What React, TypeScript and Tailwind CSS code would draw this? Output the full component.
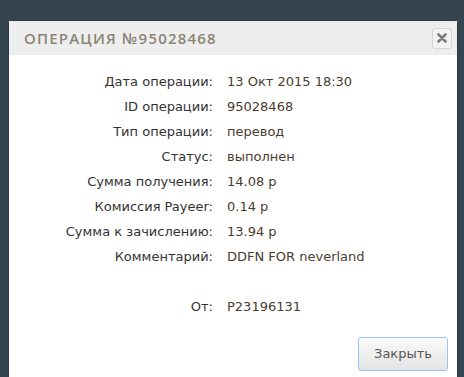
import React from 'react';

const rows: [string, string][] = [
    ['Дата операции:', '13 Окт 2015 18:30'],
    ['ID операции:', '95028468'],
    ['Тип операции:', 'перевод'],
    ['Статус:', 'выполнен'],
    ['Сумма получения:', '14.08 р'],
    ['Комиссия Payeer:', '0.14 р'],
    ['Сумма к зачислению:', '13.94 р'],
    ['Комментарий:', 'DDFN FOR neverland'],
    ['', ''],
    ['От:', 'P23196131'],
];

export default function App() {
    return (
        <div className="w-[464px] h-[377px] overflow-hidden bg-[#344550] pt-[20px] pl-[8px]">
            <div className="w-[450px] h-[400px] bg-white rounded-t-[3px] border border-[#2a3840]">
                <div className="h-[34px] bg-[#eeeeee] flex items-center justify-between pl-[15px] pr-[5px]">
                    <h3 className="font-['Open_Sans',sans-serif] text-[15px] font-semibold tracking-[1.2px] text-[#8c8374]">
                        ОПЕРАЦИЯ №95028468
                    </h3>
                    <button className="w-[20px] h-[21px] rounded-[3px] border border-[#d6d6d6] bg-[#f2f2f2] flex items-center justify-center">
                        <svg width="10" height="10" viewBox="0 0 10 10">
                            <path d="M1.5 1.5 L8.5 8.5 M8.5 1.5 L1.5 8.5" stroke="#7a7a7a" strokeWidth="2.6" strokeLinecap="round" />
                        </svg>
                    </button>
                </div>
                <div className="pt-[14px] font-['DejaVu_Sans',sans-serif] text-[13px] leading-[25px]">
                    {rows.map(([label, value], i) => (
                        <div key={i} className="flex h-[25px]">
                            <div className="w-[204px] text-right text-[#333333]">{label}</div>
                            <div className="pl-[14px] text-[#4a3c2e]">{value}</div>
                        </div>
                    ))}
                </div>
                <div className="flex justify-end pr-[9px] pt-[18px]">
                    <button className="w-[90px] h-[34px] rounded-[3px] border border-[#9ec1ef] bg-gradient-to-b from-[#fafafa] to-[#e4e4e4] font-['DejaVu_Sans',sans-serif] text-[13px] text-[#555555]">
                        Закрыть
                    </button>
                </div>
            </div>
        </div>
    );
}
